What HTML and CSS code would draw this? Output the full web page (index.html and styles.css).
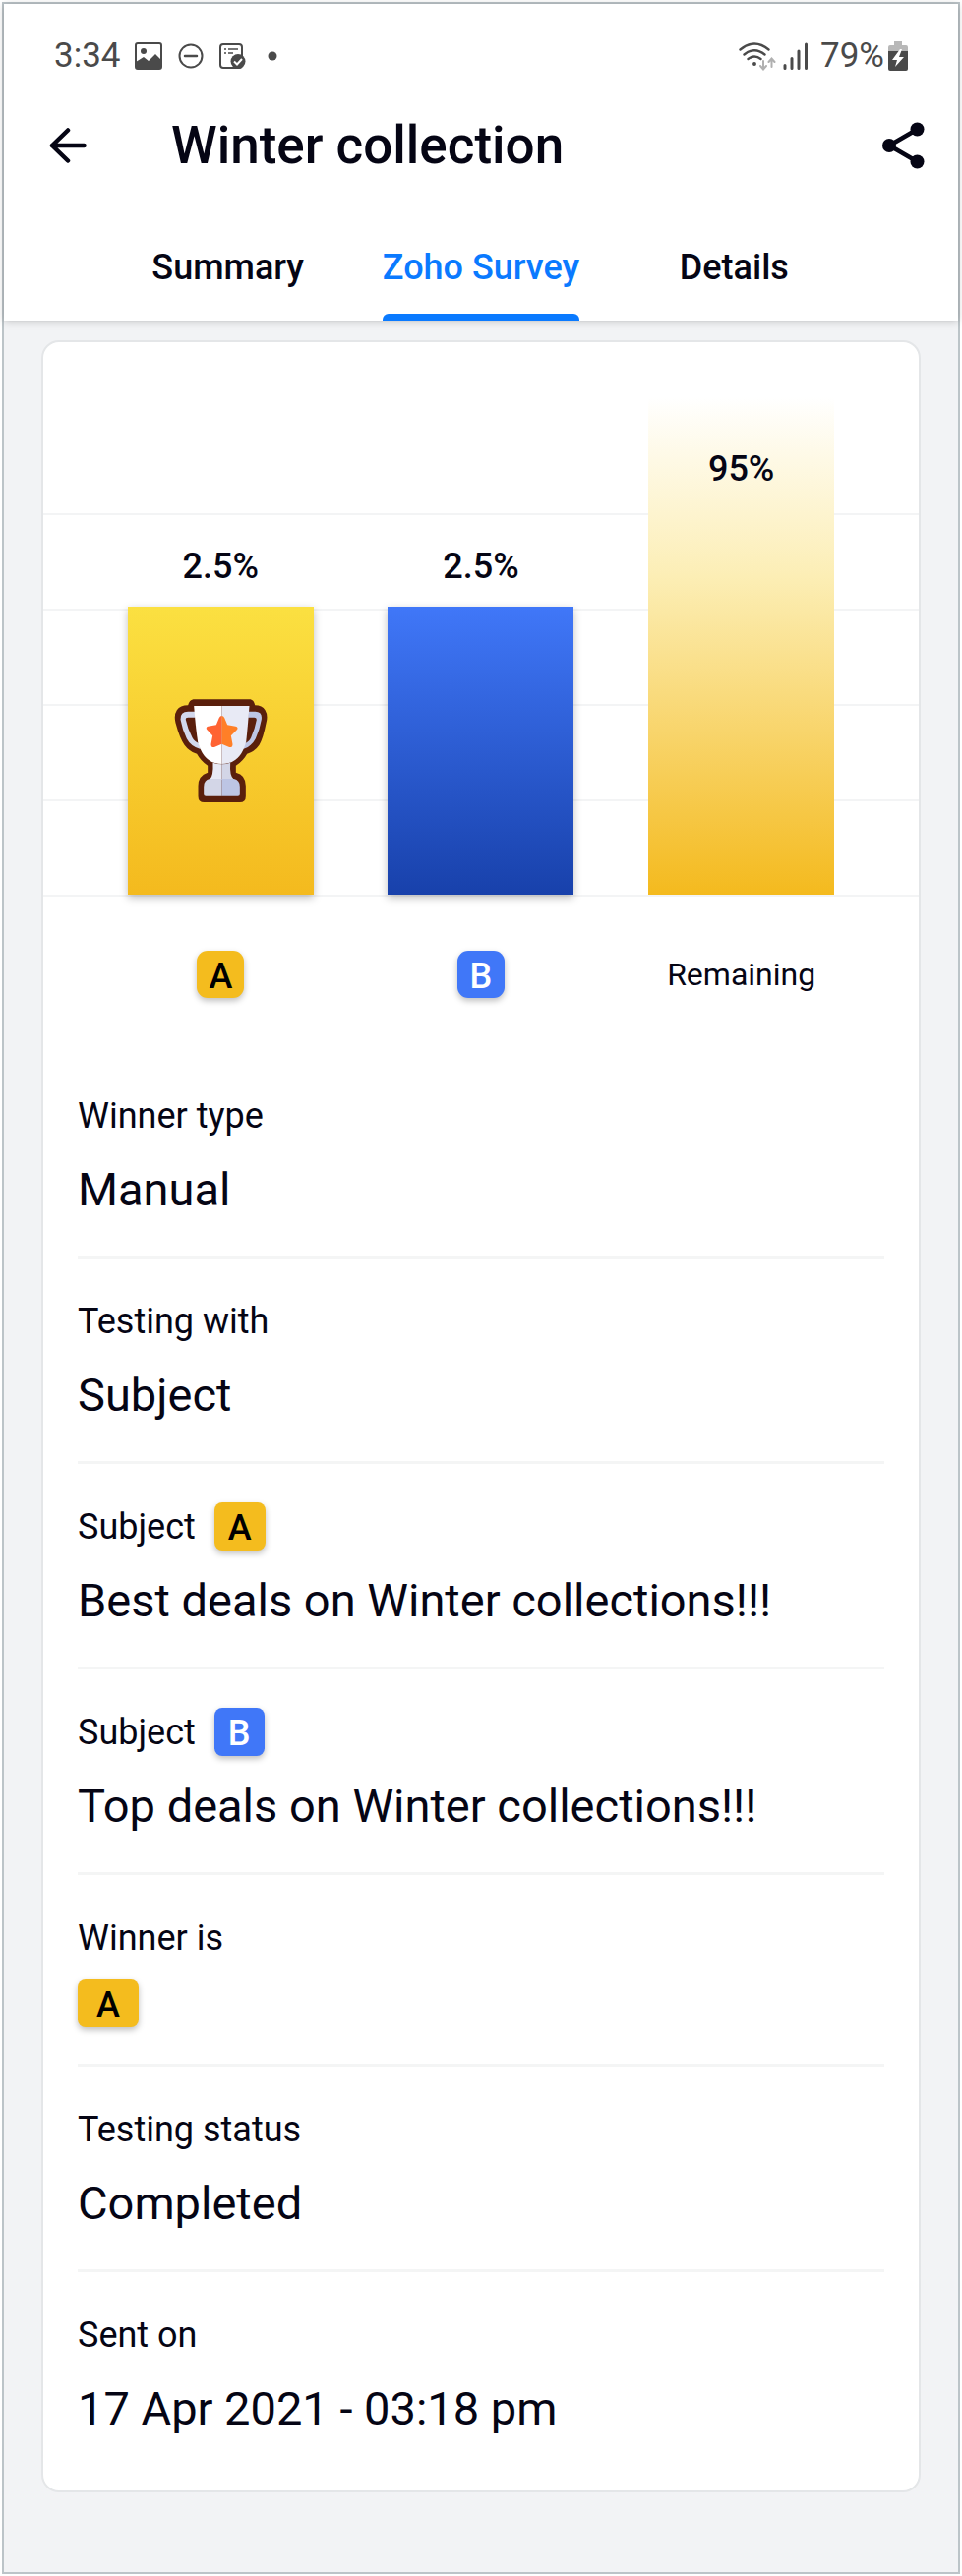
FILE: index.html
```html
<!DOCTYPE html>
<html lang="en">
<head>
    <meta charset="UTF-8">
    <meta name="viewport" content="width=device-width, initial-scale=1.0">
    <title>Winter collection</title>
    <link rel="stylesheet" href="styles.css">
</head>
<body>
    <div class="screen">
        <header class="header">
            <div class="status-bar">
                <div class="status-left">
                    <span>3:34</span>
                    <svg class="icon-image" width="28" height="28" viewBox="0 0 28 28">
                        <rect x="1" y="1" width="26" height="26" rx="2" fill="none" stroke="#4a4a4a" stroke-width="2"/>
                        <circle cx="9" cy="9" r="3" fill="#4a4a4a"/>
                        <path d="M1 20l8-5 5 4 7-7 6 6v9H1z" fill="#4a4a4a"/>
                    </svg>
                    <svg class="icon-dnd" width="26" height="26" viewBox="0 0 26 26" fill="none" stroke="#4a4a4a" stroke-width="2">
                        <circle cx="13" cy="13" r="11.5"/>
                        <path d="M7 13h12" stroke-width="2.5" stroke-linecap="round"/>
                    </svg>
                    <svg class="icon-task" width="27" height="26" viewBox="0 0 27 26">
                        <rect x="1" y="1" width="22" height="24" rx="3" fill="none" stroke="#4a4a4a" stroke-width="2"/>
                        <path d="M5 6h2M9 6h10M5 10h2M9 10h5" stroke="#4a4a4a" stroke-width="1.5"/>
                        <circle cx="19" cy="18.500" r="7.500" fill="#4a4a4a"/>
                        <path d="M15 18.500l3 3 5-5.500" fill="none" stroke="#fff" stroke-width="2"/>
                    </svg>
                    <svg class="icon-dot" width="10" height="10" viewBox="0 0 10 10"><circle cx="5" cy="5" r="4.500" fill="#4a4a4a"/></svg>
                </div>
                <div class="status-right">
                    <svg width="38" height="29" viewBox="0 0 38 29" fill="none" stroke="#4a4a4a" stroke-width="2.400" stroke-linecap="round">
                        <path d="M1.500 7.500Q16 -4.500 30.500 7.500M5.500 12.500Q16 4 26.500 12.500M9.500 17Q16 12 22.500 17"/>
                        <circle cx="16" cy="22" r="1.200" fill="#4a4a4a" stroke-width="1.500"/>
                        <path d="M25 19v8M22 24l3 3.500 3-3.500M33.500 25v-8M30.500 20l3-3.500 3 3.500" stroke="#b0b0b0" stroke-width="2"/>
                    </svg>
                    <svg class="icon-signal" width="26" height="28" viewBox="0 0 26 28" stroke="#4a4a4a" stroke-width="3" stroke-linecap="round">
                        <path d="M2 23.500v3M9 16.500v10M16 9v17.500M23.500 2v24.500"/>
                    </svg>
                    <span>79%</span>
                    <svg class="icon-battery" width="20" height="30" viewBox="0 0 20 30">
                        <path d="M6 0h8v4h4q2 0 2 2v4H0V6q0-2 2-2h4z" fill="#b8b8b8"/>
                        <path d="M0 10h20v18q0 2-2 2H2q-2 0-2-2z" fill="#4a4a4a"/>
                        <path d="M12 8l-8 11h5l-2 7 9-10h-5l3-8z" fill="#fff"/>
                    </svg>
                </div>
            </div>

            <div class="title-bar">
                <button class="icon-btn" type="button" aria-label="Back">
                    <svg width="38" height="36" viewBox="0 0 38 36" fill="none" stroke="#050514" stroke-width="4.500" stroke-linecap="round" stroke-linejoin="round">
                        <path d="M35.500 18H3M19 2.500L3 18l16 15.500"/>
                    </svg>
                </button>
                <h1>Winter collection</h1>
                <button class="icon-btn" type="button" aria-label="Share">
                    <svg width="43" height="48" viewBox="0 0 43 48" fill="#050514">
                        <path d="M35.500 7.500L7 24l28.500 16.500" fill="none" stroke="#050514" stroke-width="4.500"/>
                        <circle cx="35.500" cy="7.500" r="7"/>
                        <circle cx="7" cy="24" r="7"/>
                        <circle cx="35.500" cy="40.500" r="7"/>
                    </svg>
                </button>
            </div>

            <nav class="tabs">
                <a class="tab" href="#summary">Summary</a>
                <a class="tab active" href="#survey" aria-current="page">Zoho Survey</a>
                <a class="tab" href="#details">Details</a>
            </nav>
        </header>

        <main class="card">
            <div class="chart">
                <div class="column">
                    <span class="percent">2.5%</span>
                    <div class="bar bar-a">
                        <svg width="95" height="105" viewBox="80 63 284 315">
                            <path d="M138 64H312Q323 66 326 82Q348 82 357 97Q366 112 361 132Q351 184 339 203Q325 224 302 230Q290 252 268 266V287Q298 294 298 328V360Q298 378 280 378H171Q153 378 153 360V328Q153 296 182 287V266Q161 252 149 230Q126 224 111 203Q97 184 84 136Q78 112 88 97Q98 82 122 82Q126 66 138 64Z" fill="#5a1f0c"/>
                            <path d="M144 101H122Q98 101 99 125Q105 158 118 184Q130 208 160 216L155 198Q142 194 135 181Q121 154 115 126Q114 119 122 119H144Z" fill="#d3d8ec"/>
                            <path d="M306 101H327Q349 101 346 125Q340 158 328 184Q316 208 290 216L296 198Q308 194 314 181Q326 154 331 126Q331 119 324 119H305Z" fill="#bdc5e4"/>
                            <path d="M140 84H225V261Q170 261 152 194Q145 150 140 84Z" fill="#fff"/>
                            <path d="M225 84H309Q304 150 299 194Q281 261 225 261Z" fill="#e8eaf5"/>
                            <path d="M198 257Q211 262 225 262V308H188Q200 298 198 257Z" fill="#e8eaf5"/>
                            <path d="M225 262Q239 262 251 257Q248 298 262 308H225Z" fill="#d3d6e7"/>
                            <path d="M225 306H188Q170 310 170 330V354Q170 359 176 359H225Z" fill="#d3d6e7"/>
                            <path d="M225 306H262Q280 310 280 330V354Q280 359 274 359H225Z" fill="#bdc5e4"/>
                            <path d="M225 114Q220 114 217 120L208 142L183 146Q174 149 180 157L197 175L192 201Q192 212 202 210L225 200Z" fill="#ff6333"/>
                            <path d="M225 114Q230 114 233 120L242 142L267 146Q277 149 271 157L253 175L258 201Q258 212 248 210L225 200Z" fill="#ff7f27"/>
                        </svg>
                    </div>
                </div>
                <div class="column">
                    <span class="percent">2.5%</span>
                    <div class="bar bar-b"></div>
                </div>
                <div class="column">
                    <div class="bar bar-rest"><span class="percent">95%</span></div>
                </div>
            </div>

            <div class="legend">
                <span class="badge badge-square">A</span>
                <span class="badge badge-square blue">B</span>
                <span class="legend-text">Remaining</span>
            </div>

            <dl class="info">
                <div class="item">
                    <dt>Winner type</dt>
                    <dd>Manual</dd>
                </div>
                <div class="item">
                    <dt>Testing with</dt>
                    <dd>Subject</dd>
                </div>
                <div class="item">
                    <dt>Subject <span class="badge">A</span></dt>
                    <dd>Best deals on Winter collections!!!</dd>
                </div>
                <div class="item">
                    <dt>Subject <span class="badge blue">B</span></dt>
                    <dd>Top deals on Winter collections!!!</dd>
                </div>
                <div class="item">
                    <dt>Winner is</dt>
                    <dd class="winner"><span class="badge badge-wide">A</span></dd>
                </div>
                <div class="item">
                    <dt>Testing status</dt>
                    <dd>Completed</dd>
                </div>
                <div class="item">
                    <dt>Sent on</dt>
                    <dd>17 Apr 2021 - 03:18 pm</dd>
                </div>
            </dl>
        </main>
    </div>
</body>
</html>
```
FILE: styles.css
```css
* {
    box-sizing: border-box;
}

body {
    margin: 0;
    padding: 2px;
    background: #ffffff;
    color: #050514;
    font-family: Roboto, 'Liberation Sans', sans-serif;
    font-size: 36px;
}

.screen {
    min-height: calc(100vh - 4px);
    border: 2px solid #bcc4c8;
    background: #f2f3f5;
}

.header {
    background: #ffffff;
    box-shadow: 0 1px 8px rgba(0, 0, 0, 0.22);
}

.status-bar {
    display: flex;
    justify-content: space-between;
    padding: 32px 51px 0;
    color: #4a4a4a;
    font-size: 35px;
    line-height: 42px;
}

.status-left,
.status-right {
    display: flex;
    align-items: center;
}

.icon-image {
    margin-left: 14px;
}

.icon-dnd,
.icon-task {
    margin-left: 16px;
}

.icon-dot {
    margin-left: 22px;
}

.icon-signal {
    margin: 0 12px 0 7px;
}

.icon-battery {
    margin-left: 4px;
}

.title-bar {
    display: flex;
    align-items: center;
    padding: 37px 34px 0 46px;
}

.title-bar h1 {
    flex: 1;
    margin: 0 0 0 86px;
    font-size: 53px;
    font-weight: 500;
    line-height: 66px;
}

.icon-btn {
    display: flex;
    padding: 0;
    border: none;
    background: none;
    cursor: pointer;
}

.tabs {
    display: grid;
    grid-template-columns: repeat(3, 1fr);
    justify-items: center;
    margin-top: 60px;
    padding: 0 99px;
}

.tab {
    padding-top: 6px;
    color: #050514;
    font-weight: 500;
    line-height: 50px;
    text-decoration: none;
}

/* indicator under the tab label */
.tab::after {
    content: '';
    display: block;
    height: 7px;
    margin-top: 22px;
    border-radius: 6px 6px 0 0;
}

.tab.active {
    color: #0a7aff;
}

.tab.active::after {
    background: #0a7aff;
}

.card {
    margin: 20px 38px;
    padding-bottom: 16px;
    border: 2px solid #e4e6e8;
    border-radius: 18px;
    background: #ffffff;
}

.chart {
    display: grid;
    grid-template-columns: repeat(3, 1fr);
    padding: 56px 48px 2px;
    background: repeating-linear-gradient(to top, #f3f4f5 0 2px, transparent 2px 97px) bottom / 100% 390px no-repeat;
}

.column {
    display: flex;
    flex-direction: column;
    align-items: center;
    justify-content: flex-end;
}

.percent {
    font-weight: 500;
    line-height: 42px;
}

.bar {
    display: flex;
    align-items: center;
    justify-content: center;
    width: 189px;
    height: 293px;
    margin-top: 20px;
    box-shadow: 0 3px 8px rgba(0, 0, 0, 0.25);
}

.bar-a {
    background: linear-gradient(#fbe041, #f4ba1e);
}

.bar-b {
    background: linear-gradient(#4077f8, #1841ab);
}

.bar-rest {
    align-items: flex-start;
    height: 506px;
    margin-top: 0;
    padding-top: 52px;
    background: linear-gradient(#ffffff, #fceeb5 36%, #f4ba1e);
    box-shadow: none;
}

.legend {
    display: grid;
    grid-template-columns: repeat(3, 1fr);
    align-items: center;
    justify-items: center;
    padding: 55px 48px 56px;
}

.legend-text {
    font-size: 32px;
}

.badge {
    height: 49px;
    padding: 3px 14px 0;
    border-radius: 8px;
    background: #f4bc1e;
    box-shadow: 0 3px 6px rgba(0, 0, 0, 0.25);
    color: #000000;
    font-size: 36px;
    font-weight: 500;
    line-height: 46px;
    text-align: center;
}

.badge.blue {
    background: #4077f8;
    color: #ffffff;
}

.badge-square {
    width: 48px;
    height: 48px;
    padding: 3px 0 0;
    border-radius: 11px;
}

.badge-wide {
    padding: 3px 19px 0;
}

.info {
    margin: 0 35px;
}

.item {
    padding: 39px 0 37px;
    border-bottom: 3px solid #f4f5f5;
}

.item:last-child {
    border-bottom: none;
}

.item dt {
    display: flex;
    align-items: flex-start;
    gap: 19px;
    line-height: 50px;
}

.item dd {
    margin: 20px 0 0;
    font-size: 47px;
    line-height: 60px;
}

.item .winner {
    display: flex;
    margin-top: 17px;
}
```
